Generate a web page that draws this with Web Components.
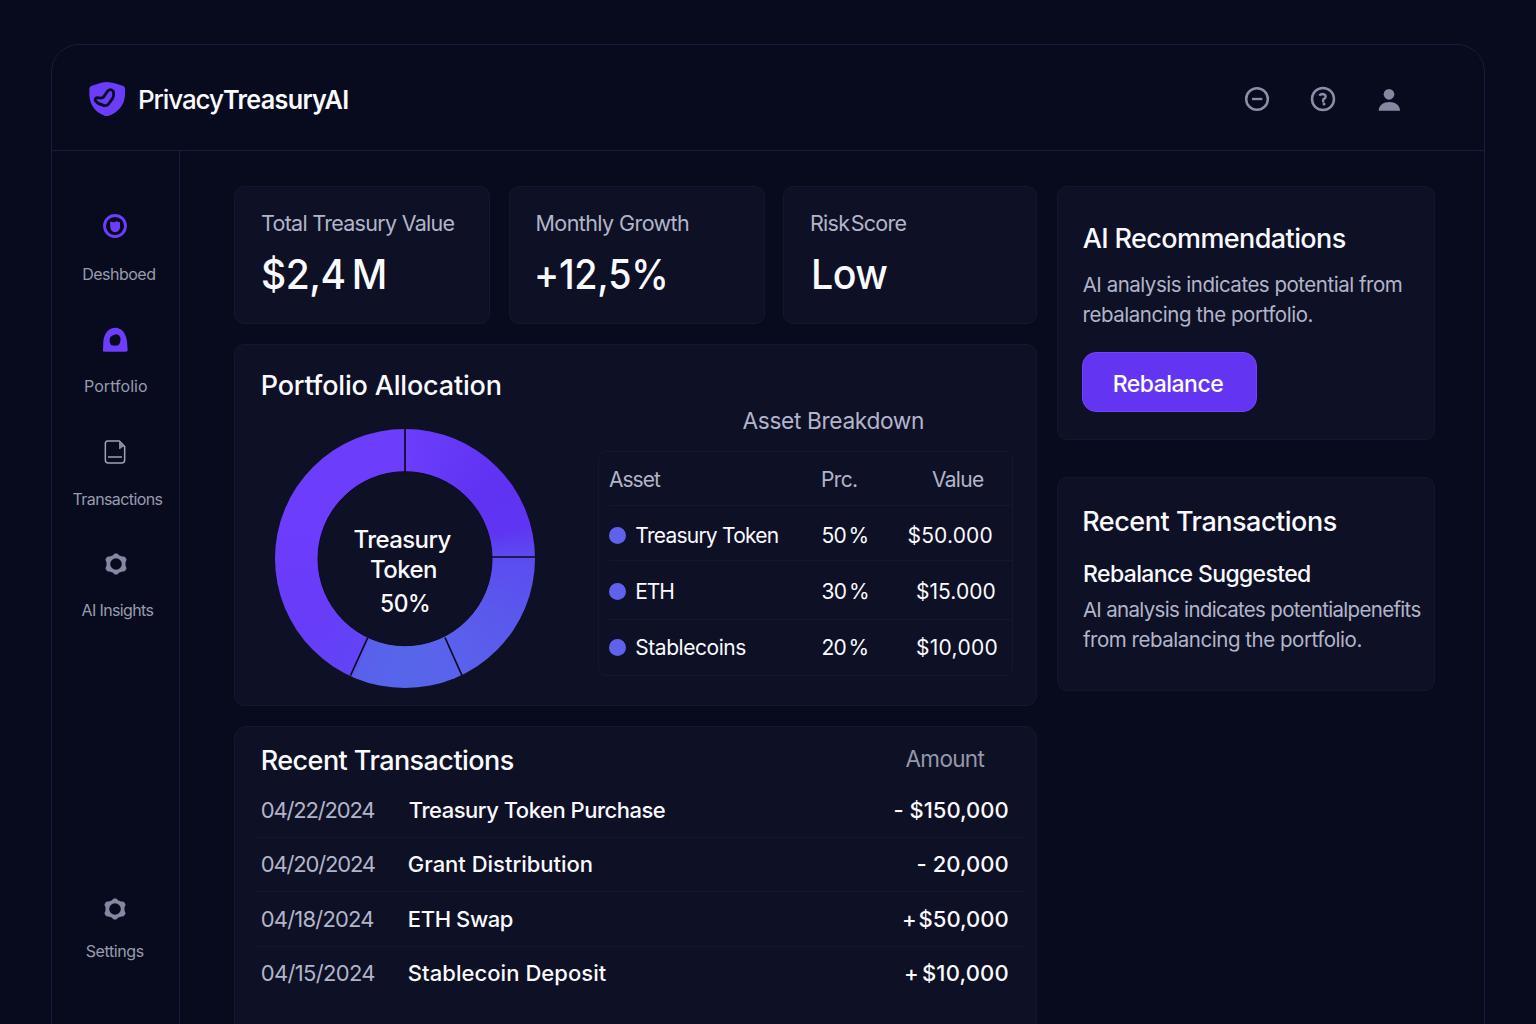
<!DOCTYPE html>
<html lang="en">
<head>
<meta charset="utf-8">
<title>PrivacyTreasuryAI</title>
<style>
html,body{margin:0;height:100%;overflow:hidden;background:#080b1d}
body{font-family:Inter,"Liberation Sans",sans-serif;color:#fafaff;
  --line:#171d3f;--card:#0e1025;--edge:#141731;--muted:#b2b5c9;--accent:#6c3dfc}
</style>
</head>
<body>
<treasury-app></treasury-app>
<script>
const define=(name,html,init)=>{
  const t=document.createElement('template');t.innerHTML=html;
  customElements.define(name,class extends HTMLElement{
    constructor(){super();this.attachShadow({mode:'open'}).append(t.content.cloneNode(true));}
    connectedCallback(){if(init)init.call(this,this.shadowRoot);}
  });
};

/* One line of text tracked so that its glyphs span exactly the "w" attribute.
   "ws" adjusts the word gap, "sx" condenses the glyphs. */
const ctx=document.createElement('canvas').getContext('2d');
define('fit-text',`<style>
:host{display:block;white-space:pre;flex:none;font-size:var(--s,22px);line-height:var(--lh,30px);font-weight:var(--wt,400)}
span{display:block;width:max-content;transform-origin:0 50%}
</style><span><slot></slot></span>`,function(root){
  const w=+this.getAttribute('w'),size=this.getAttribute('size'),wt=this.getAttribute('wt');
  const ws=+this.getAttribute('ws')||0,sx=+this.getAttribute('sx')||1;
  if(size)this.style.setProperty('--s',size+'px');
  if(wt)this.style.setProperty('--wt',wt);
  const cs=getComputedStyle(this),text=this.textContent;
  ctx.font=`${cs.fontWeight} ${cs.fontSize} ${cs.fontFamily}`;
  const m=ctx.measureText(text),spaces=text.split(' ').length-1;
  const ink=m.actualBoundingBoxLeft+m.actualBoundingBoxRight+ws*spaces;
  const span=root.querySelector('span');
  span.style.letterSpacing=((w/sx-ink)/([...text].length-1))+'px';
  if(ws)span.style.wordSpacing=ws+'px';
  if(sx!==1)span.style.transform=`scaleX(${sx})`;
  span.style.marginLeft=m.actualBoundingBoxLeft*sx+'px';
  this.style.width=w+'px';
});

define('ui-card',`<style>
:host{display:block;box-sizing:border-box;background:var(--card);border:1px solid var(--edge);border-radius:10px}
</style><slot></slot>`);

define('stat-card',`<style>
:host{display:block}
ui-card{height:138px;padding:21px 0 0 var(--pl,27px)}
::slotted([slot=value]){--lh:44px;--s:41px;--wt:500;margin-top:13.5px;margin-left:var(--vl,.8px)}
::slotted([slot=label]){--s:21.5px;color:var(--muted)}
</style><ui-card><slot name="label"></slot><slot name="value"></slot></ui-card>`);

const gear=`<svg viewBox="-36 -36 72 72" width="24" height="24"><path fill="#8588a3" stroke="#8588a3" stroke-width="7" stroke-linejoin="round" fill-rule="evenodd" d="M-3-28H3L7-23 16-20 25-18 28-13 25-6V6L28 13 25 18 16 20 7 23 3 28H-3L-7 23-16 20-25 18-28 13-25 6V-6L-28-13-25-18-16-20-7-23ZM0-21A21 21 0 1 0 0 21 21 21 0 1 0 0-21Z"/></svg>`;
const icons={
 dash:`<svg viewBox="-39 -39 78 78" width="26" height="26"><circle r="31.5" fill="none" stroke="#6c3dfc" stroke-width="8.5"/><path fill="#6c3dfc" d="M-15-12Q-9-14-4-11L1-12 5-15 10-11 15-12V4Q14 18 0 19-13 18-14 4Z"/></svg>`,
 port:`<svg viewBox="-39 -39 78 78" width="26" height="26"><path fill="#6c3dfc" fill-rule="evenodd" d="M-36 30Q-38 35-31 35H32Q39 35 38 29L36 4C33-22 19-37 1-37-18-37-32-22-35 4ZM4-17Q15-16 17-2 16 10 10 16-2 19-12 15-18 8-16-3-14-14 4-17Z"/></svg>`,
 doc:`<svg viewBox="-39 -39 78 78" width="26" height="26"><path fill="none" stroke="#9ea1b8" stroke-width="4.5" d="M-22-33H13L29-16V24Q29 33 20 33H-20Q-29 33-29 24V-24Q-29-33-22-33Z"/><path fill="#8588a3" d="M12-32V-8Q18-9 22-14L28-16Z"/><path stroke="#9ea1b8" stroke-width="4.5" d="M-21 15H21"/></svg>`,
 gear
};
define('nav-item',`<style>
:host{display:block}
.i{height:26px;display:flex;align-items:center;justify-content:center;width:26px;margin-left:var(--ix,50px)}
svg{display:block}
::slotted(fit-text){--s:16px;--lh:20px;color:#989bb0}
</style><div class="i"></div><slot></slot>`,function(r){r.querySelector('.i').innerHTML=icons[this.getAttribute('icon')];});

define('app-header',`<style>
:host{display:flex;box-sizing:border-box;height:106px;border-bottom:1px solid var(--line);align-items:flex-start;padding-left:36px}
.logo{margin-top:36px}
.brand{display:flex;margin:39px 0 0 14px;--lh:32px}
.tools{display:flex;gap:40px;margin:41px 82px 0 auto}
svg{display:block}
</style>
<svg class="logo" viewBox="144 153 114 108" width="38" height="36"><path fill="#6b3dfb" d="M200 156C217 157 236 163 250 168Q255 170 255 176V194C254 226 232 249 204 258Q199 259 194 257C168 248 150 228 148 195V176Q148 170 154 168C168 163 184 157 200 156Z"/>
<path fill="none" stroke="#0a0c22" stroke-width="8.5" stroke-linejoin="round" d="M166 212Q164 204 172 203 183 206 190 202L203 183Q213 174 220 184 223 194 218 205L204 224Q196 230 186 224 174 223 166 212Z"/></svg>
<div class="brand"><fit-text w="84" size="26" wt="500">Privacy</fit-text><fit-text w="124" size="26" wt="600" sx=".97">TreasuryAI</fit-text></div>
<div class="tools">
<svg viewBox="-39 -39 78 78" width="26" height="26"><circle r="32.5" fill="none" stroke="#8b8ea8" stroke-width="7.5"/><path stroke="#8b8ea8" stroke-width="7" d="M-15 0H16"/></svg>
<svg viewBox="-39 -39 78 78" width="26" height="26"><circle r="33" fill="none" stroke="#8b8ea8" stroke-width="7.5"/><path fill="none" stroke="#8b8ea8" stroke-width="7" d="M-11-10Q-8-15-1-15 8-14 8-7 7-2 1 1L0 10"/><circle cx="3" cy="15" r="4.5" fill="#8b8ea8"/></svg>
<svg viewBox="-39 -39 78 78" width="26" height="26"><g fill="#8588a1"><circle cx="0" cy="-14" r="16"/><path d="M-31 35C-31 18-16 9 1 9S33 18 33 35Z"/></g></svg>
</div>`);

define('app-sidebar',`<style>
:host{display:block;box-sizing:border-box;width:128px;flex:none;border-right:1px solid var(--line);padding-top:62px}
</style>
<nav-item icon="dash"><fit-text w="72" style="margin:25px 0 0 31.2px">Deshboed</fit-text></nav-item>
<nav-item icon="port" style="margin-top:43px"><fit-text w="62" style="margin:23px 0 0 33px">Portfolio</fit-text></nav-item>
<nav-item icon="doc" style="margin-top:43px"><fit-text w="90" style="margin:24px 0 0 20.5px">Transactions</fit-text></nav-item>
<nav-item icon="gear" style="margin-top:42px;--ix:51px"><fit-text w="72" style="margin:23px 0 0 29.5px">AI Insights</fit-text></nav-item>
<nav-item icon="gear" style="margin-top:276px;--ix:49.6px"><fit-text w="58" style="margin:18.5px 0 0 33.7px">Settings</fit-text></nav-item>`);

define('donut-chart',`<style>
:host{display:grid;width:260px;height:260px}
:host>*{grid-area:1/1}
.ring{height:259px;border-radius:50%;background:conic-gradient(#6c3efb 0,#6537f7 25deg,#6032f2 48deg,#5f35f3 75deg,#5c4cf0 90deg,#5a58ed 120deg,#5a62eb 155deg,#5666ea 180deg,#5a60ec 203deg,#6144f5 206deg,#683cf9 240deg,#6c3dfc 290deg,#6c3efb 360deg)}
svg{display:block}
.t{display:flex;flex-direction:column;align-items:center;padding-top:95.5px;--s:24px;--wt:500}
</style><div class="ring"></div>
<svg width="260" height="260" viewBox="0 0 260 260"><circle cx="130" cy="129.7" r="87" fill="#0e1025" stroke="#0a0a20"/><path stroke="#0b0a22" stroke-width="1.7" d="M130 0V43M217 128H260M170 208.5L187 246.5M92.8 208.5L75.5 246.5"/></svg>
<div class="t"><fit-text w="97" style="margin-left:-4px">Treasury</fit-text><fit-text w="65" style="margin-left:-3px">Token</fit-text><fit-text w="48" sx=".95" style="margin:4px 0 0 -1px">50%</fit-text></div>`);

define('asset-row',`<style>
:host{display:flex;box-sizing:border-box;border-bottom:1px solid var(--edge);--s:21px;align-items:flex-start}
.n{display:flex;align-items:center;gap:10.3px;width:213px}
i{width:17px;height:17px;border-radius:50%;background:#6062ee}
:host([head]) i{display:none}:host([head]){color:var(--muted)}
.v{margin-left:auto}
</style><div class="n"><i></i><slot name="n"></slot></div><slot name="p"></slot><div class="v"><slot name="v"></slot></div>`);

define('portfolio-card',`<style>
:host{display:block}
ui-card{height:362px;display:flex}
.l{padding:23px 0 0 27px;width:363px;box-sizing:border-box}
donut-chart{margin:25px 0 0 13px}
.r{width:415px;padding-top:60.5px}
.box{border:1px solid var(--edge);border-radius:8px;margin-top:15.5px;height:225px;box-sizing:border-box;padding:0 0 0 10px}
asset-row:last-child{border:0}
</style><ui-card><div class="l"><fit-text w="238" size="27" style="--lh:36px;--wt:500;margin-left:.7px">Portfolio Allocation</fit-text><donut-chart></donut-chart></div>
<div class="r"><fit-text w="180.5" size="22.7" style="margin-left:144.5px;color:var(--muted)">Asset Breakdown</fit-text>
<div class="box">
<asset-row head style="height:54px;padding:12.5px 28px 0 0"><fit-text slot="n" w="52">Asset</fit-text><fit-text slot="p" w="35">Prc.</fit-text><fit-text slot="v" w="52">Value</fit-text></asset-row>
<asset-row style="height:55px;padding:14.5px 20.5px 0 0"><fit-text slot="n" w="141.5">Treasury Token</fit-text><fit-text slot="p" w="45" ws="-2.5" style="margin-left:.6px">50 %</fit-text><fit-text slot="v" w="83">$50.000</fit-text></asset-row>
<asset-row style="height:59px;padding:15.5px 17.5px 0 0"><fit-text slot="n" w="37">ETH</fit-text><fit-text slot="p" w="45.5" ws="-2" style="margin-left:.6px">30 %</fit-text><fit-text slot="v" w="77.5">$15.000</fit-text></asset-row>
<asset-row style="height:55px;padding:12.5px 15.5px 0 0"><fit-text slot="n" w="110">Stablecoins</fit-text><fit-text slot="p" w="45" ws="-2.5" style="margin-left:.6px">20 %</fit-text><fit-text slot="v" w="79.5">$10,000</fit-text></asset-row>
</div></div></ui-card>`);

define('tx-row',`<style>
:host{display:flex;box-sizing:border-box;height:54.6px;border-bottom:1px solid var(--edge);padding:11.6px 16.5px 0 5.8px;margin:0 12px 0 21px;--s:22px}
:host(:last-of-type){border:0}
.d{width:147px;color:var(--muted)}.a{margin-left:auto}
</style><div class="d"><slot name="d"></slot></div><slot name="n"></slot><div class="a"><slot name="a"></slot></div>`);

define('tx-card',`<style>
:host{display:block}
ui-card{height:320px;border-radius:12px}
.h{display:flex;align-items:flex-start;padding:15.5px 51.5px 0 27.7px;height:56px;box-sizing:border-box}
tx-row{--wt:500}
[slot=d]{--wt:400}
</style><ui-card><div class="h"><fit-text w="251" size="27" style="--lh:36px;--wt:500">Recent Transactions</fit-text><fit-text w="79" size="22.5" style="margin:1px 0 0 auto;color:#9598ac">Amount</fit-text></div>
<tx-row><fit-text slot="d" w="112.5">04/22/2024</fit-text><fit-text slot="n" w="256">Treasury Token Purchase</fit-text><fit-text slot="a" w="113">- $150,000</fit-text></tx-row>
<tx-row><fit-text slot="d" w="113">04/20/2024</fit-text><fit-text slot="n" w="183">Grant Distribution</fit-text><fit-text slot="a" w="90">- 20,000</fit-text></tx-row>
<tx-row><fit-text slot="d" w="111.5">04/18/2024</fit-text><fit-text slot="n" w="104">ETH Swap</fit-text><fit-text slot="a" w="103.5" ws="-4">+ $50,000</fit-text></tx-row>
<tx-row><fit-text slot="d" w="112.5">04/15/2024</fit-text><fit-text slot="n" w="198">Stablecoin Deposit</fit-text><fit-text slot="a" w="101.5" ws="-3">+ $10,000</fit-text></tx-row></ui-card>`);

define('ai-card',`<style>
:host{display:block}
ui-card{height:254px;padding:34px 0 0 24.7px}
p{margin:13px 0 0;--s:20.5px;color:var(--muted)}
button{display:flex;align-items:center;margin:22px 0 0 -1px;width:175px;height:60px;box-sizing:border-box;border:1px solid #7043ff;border-radius:14px;background:#6334f2;padding:4px 0 0 31px;font:inherit;color:#fff;--s:23px;--wt:500}
</style><ui-card><fit-text w="263" size="27" style="--lh:36px;--wt:500">AI Recommendations</fit-text>
<p><fit-text w="319">AI analysis indicates potential from</fit-text><fit-text w="229" style="margin-left:.8px">rebalancing the portfolio.</fit-text></p>
<button><fit-text w="109.5">Rebalance</fit-text></button></ui-card>`);

define('suggest-card',`<style>
:host{display:block}
ui-card{height:214px;padding:25.5px 0 0 25.5px}
p{margin:6px 0 0 -.6px;--s:20.5px;color:var(--muted)}
</style><ui-card><fit-text w="252.5" size="27" style="--lh:36px;--wt:500;margin-left:.7px">Recent Transactions</fit-text>
<fit-text w="226" size="23" wt="500" style="margin:19px 0 0 .6px">Rebalance Suggested</fit-text>
<p><fit-text w="337.5">AI analysis indicates potentialpenefits</fit-text><fit-text w="278.5">from rebalancing the portfolio.</fit-text></p></ui-card>`);

define('treasury-app',`<style>
:host{display:block;padding:44px 51px 0;height:1024px;box-sizing:border-box;overflow:hidden}
.shell{box-sizing:border-box;height:1010px;border:1px solid var(--line);border-radius:28px;display:flex;flex-direction:column;background:#080b1d}
.body{display:flex;flex:1}
main{display:flex;gap:20px;padding:35px 0 0 54px;align-items:flex-start}
.left{width:803px;display:flex;flex-direction:column;gap:20px}
.stats{display:grid;grid-template-columns:256px 256px 254px;column-gap:18.5px}
.right{width:378px;display:flex;flex-direction:column;gap:37px}
</style>
<div class="shell"><app-header></app-header><div class="body"><app-sidebar></app-sidebar>
<main><div class="left"><div class="stats">
<stat-card><fit-text slot="label" w="192.5">Total Treasury Value</fit-text><fit-text slot="value" w="122" ws="-4" sx=".95">$2,4 M</fit-text></stat-card>
<stat-card style="--vl:.3px"><fit-text slot="label" w="152.5">Monthly Growth</fit-text><fit-text slot="value" w="128.5" sx=".92">+12,5%</fit-text></stat-card>
<stat-card style="--vl:2.5px"><fit-text slot="label" w="95.5" ws="-4">Risk Score</fit-text><fit-text slot="value" w="73" sx=".96">Low</fit-text></stat-card>
</div><portfolio-card></portfolio-card><tx-card></tx-card></div>
<div class="right"><ai-card></ai-card><suggest-card></suggest-card></div></main></div></div>`);
</script>
</body>
</html>
